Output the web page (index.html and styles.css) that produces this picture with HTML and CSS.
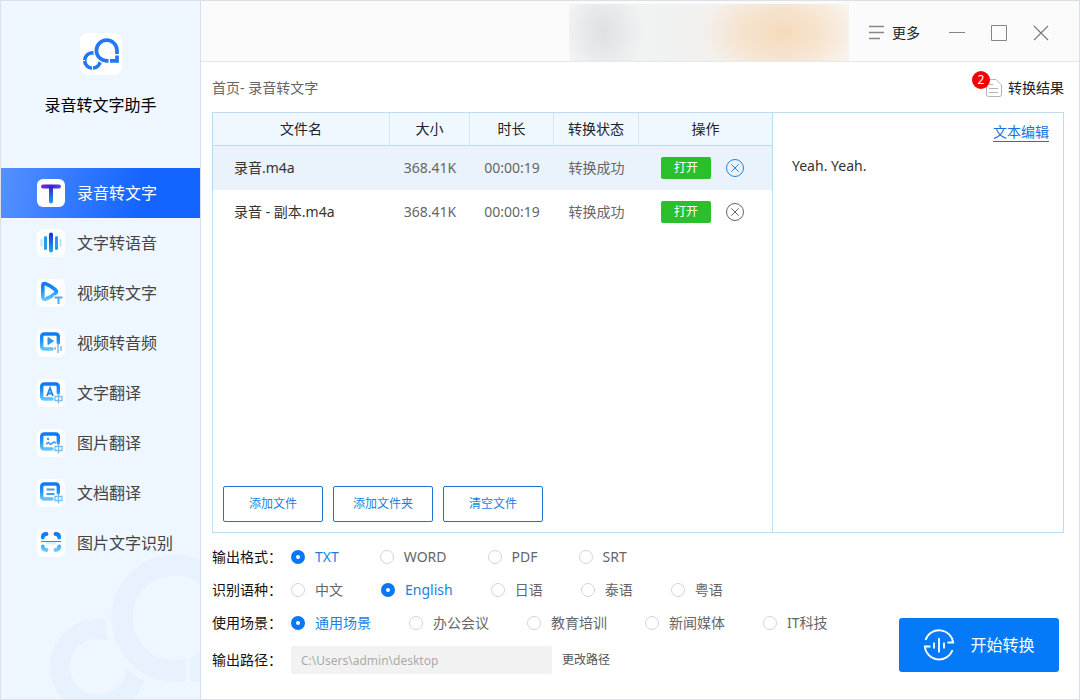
FILE: index.html
```html
<!DOCTYPE html>
<html lang="zh-CN">
<head>
<meta charset="utf-8">
<meta name="viewport" content="width=device-width, initial-scale=1">
<title>录音转文字助手</title>
<link rel="stylesheet" href="styles.css">
</head>
<body>
<svg class="defs" aria-hidden="true">
  <defs>
    <linearGradient id="blue" x1="0" y1="3" x2="0" y2="25" gradientUnits="userSpaceOnUse">
      <stop offset="0" stop-color="#0a74f2"/><stop offset=".4" stop-color="#1c93fa"/><stop offset=".9" stop-color="#74d3fb"/>
    </linearGradient>
    <linearGradient id="violet" x1="4" y1="0" x2="24" y2="0" gradientUnits="userSpaceOnUse">
      <stop offset="0" stop-color="#7a2be8"/><stop offset=".5" stop-color="#3c1fd0"/><stop offset="1" stop-color="#5b4be8"/>
    </linearGradient>
    <linearGradient id="stem" x1="0" y1="8" x2="0" y2="25" gradientUnits="userSpaceOnUse">
      <stop offset="0" stop-color="#2f2bd6"/><stop offset="1" stop-color="#1aa0f5"/>
    </linearGradient>
    <linearGradient id="bar" x1="0" y1="4" x2="0" y2="24" gradientUnits="userSpaceOnUse">
      <stop offset="0" stop-color="#1530d8"/><stop offset="1" stop-color="#18b4f5"/>
    </linearGradient>
    <symbol id="frame" viewBox="0 0 28 28">
      <path d="M15 20H7.500Q4.700 20 4.700 17.200V7.800Q4.700 5 7.500 5H18.500Q21.300 5 21.300 7.800V14" fill="none" stroke="url(#blue)" stroke-width="3.400" stroke-linecap="round"/>
    </symbol>
    <symbol id="zhong" viewBox="0 0 28 28">
      <path d="M18 17.500h7v4h-7zM21.500 15V24.500" fill="none" stroke="#74bdf3" stroke-width="1.300"/>
    </symbol>
  </defs>
</svg>
<div class="app">
  <aside class="sidebar">
    <svg class="watermark" viewBox="0 0 150 145" aria-hidden="true">
      <g fill="none" stroke="#e8f1fe">
        <circle cx="48" cy="113" r="38" stroke-width="20"/>
        <circle cx="125" cy="64" r="66" stroke="#eef6ff" stroke-width="8"/>
        <circle cx="125" cy="64" r="53" stroke-width="21"/>
        <path d="M125 117h10M141 117h10" stroke-width="21"/>
        <path d="M138 105v24" stroke="#eef6ff" stroke-width="5"/>
      </g>
    </svg>
    <div class="brand">
      <svg class="logo" viewBox="0 0 42 42" aria-hidden="true">
        <g fill="none" stroke="#2078f4">
          <circle cx="12.500" cy="27.500" r="7.800" stroke-width="3.600"/>
          <path d="M12.500 33v7M2 27.500h3" stroke="#fff" stroke-width="1"/>
          <circle cx="26.700" cy="17.500" r="12.500" fill="#fff" stroke="#fff" stroke-width="2"/>
          <path d="M37 21V17.500A10.300 10.300 0 1 0 26.700 27.800H28.500" stroke-width="3.700"/>
          <path d="M30 27.800H37V22.400" stroke-width="3.700"/>
        </g>
      </svg>
      <h1 class="brand-name">录音转文字助手</h1>
    </div>
    <nav class="nav">
      <a class="nav-item active" href="#"><svg class="nav-icon" viewBox="0 0 28 28"><path d="M14 9v13.500" stroke="url(#stem)" stroke-width="4" stroke-linecap="round"/><rect x="4" y="5.500" width="20" height="4" rx="2" fill="url(#violet)"/></svg>录音转文字</a>
      <a class="nav-item" href="#"><svg class="nav-icon" viewBox="0 0 28 28"><rect x="12" y="3.500" width="4" height="20" rx="2" fill="url(#bar)"/><g fill="#259bef"><rect x="7" y="7" width="3" height="14" rx="1.500"/><rect x="18" y="7" width="3" height="14" rx="1.500"/></g><g fill="#b4e6fa"><rect x="3.500" y="10" width="2" height="8" rx="1"/><rect x="22.500" y="10" width="2" height="8" rx="1"/></g></svg>文字转语音</a>
      <a class="nav-item" href="#"><svg class="nav-icon" viewBox="0 0 28 28"><path d="M5.800 7Q5.800 3.600 8.800 4.800Q15.500 7.600 18.800 11.200Q20.200 13 18.200 14.600Q14.500 17.800 9 20Q5.800 21 5.800 17.800Z" fill="none" stroke="url(#blue)" stroke-width="3.600" stroke-linejoin="round"/><path d="M16.500 16.500H27V26H19V21H16.500z" fill="#fff"/><path d="M17.500 18.500h8M21.500 18.500V25" stroke="#4eabf1" stroke-width="2"/></svg>视频转文字</a>
      <a class="nav-item" href="#"><svg class="nav-icon" viewBox="0 0 28 28"><use href="#frame"/><path d="M11 8.500l5.500 3.500L11 15.500z" fill="#2c93f3" stroke="#2c93f3" stroke-linejoin="round"/><path d="M18 18v3M21 15v9M24 17v5" stroke="#74bdf3" stroke-width="1.500"/></svg>视频转音频</a>
      <a class="nav-item" href="#"><svg class="nav-icon" viewBox="0 0 28 28"><use href="#frame"/><path d="M10 17L13 9L16 17M11.200 14.500h3.600" fill="none" stroke="#2388ee" stroke-width="1.800"/><use href="#zhong"/></svg>文字翻译</a>
      <a class="nav-item" href="#"><svg class="nav-icon" viewBox="0 0 28 28"><use href="#frame"/><circle cx="11" cy="10" r="1.200" fill="#3ca0f5"/><path d="M9 15l2.500-1.500 2 2 3.500-2.500 2 1" fill="none" stroke="#3ca0f5" stroke-width="1.700"/><use href="#zhong"/></svg>图片翻译</a>
      <a class="nav-item" href="#"><svg class="nav-icon" viewBox="0 0 28 28"><use href="#frame"/><path d="M9.500 10.500h8M9.500 15h8" stroke="#3c9ff5" stroke-width="2"/><use href="#zhong"/></svg>文档翻译</a>
      <a class="nav-item" href="#"><svg class="nav-icon" viewBox="0 0 28 28"><path d="M5.800 8.500Q5.800 5 9.500 5M18.500 5Q22.200 5 22.200 8.500M22.200 17.500Q22.200 21 18.500 21M9.500 21Q5.800 21 5.800 17.500" fill="none" stroke="url(#blue)" stroke-width="3.800" stroke-linecap="round"/><path d="M9 13h10v2.500H9z" fill="#d5edfd"/><path d="M4 12.500h20" stroke="#278def" stroke-width="1"/></svg>图片文字识别</a>
    </nav>
  </aside>

  <main class="main">
    <header class="topbar">
      <div class="account"></div>
      <button class="more" type="button"><svg width="16" height="16" viewBox="0 0 16 16" aria-hidden="true"><path d="M0 1.500h15M0 7.500h15M0 13.500h11" stroke="#868686" stroke-width="1.600"/></svg>更多</button>
      <div class="window-controls">
        <button type="button" aria-label="最小化"><svg width="16" height="16" viewBox="0 0 16 16"><path d="M0 7.500h16" stroke="#858585"/></svg></button>
        <button type="button" aria-label="最大化"><svg width="16" height="16" viewBox="0 0 16 16"><path d="M.5.5h15v15H.5z" fill="none" stroke="#858585"/></svg></button>
        <button type="button" aria-label="关闭"><svg width="16" height="16" viewBox="0 0 16 16"><path d="M1 1l14 14M15 1L1 15" stroke="#777" stroke-width="1.100"/></svg></button>
      </div>
    </header>

    <div class="content">
      <div class="crumbs">
        <span>首页- 录音转文字</span>
        <button class="results" type="button">
          <span class="results-icon"><svg width="16" height="18" viewBox="0 0 16 18" aria-hidden="true"><path d="M.5.500H10L15.500 6V15.500Q15.500 17.500 13.500 17.500H2.500Q.5 17.500.5 15.500Z" fill="none" stroke="#b4b4b4"/><path d="M3 5.500h4M3 9.500h9M3 13.500h9" stroke="#b4b4b4"/></svg><span class="badge">2</span></span>转换结果
        </button>
      </div>

      <section class="panel">
        <div class="files">
          <table class="table">
            <colgroup><col class="col-name"><col class="col-size"><col class="col-time"><col class="col-state"><col></colgroup>
            <thead><tr><th>文件名</th><th>大小</th><th>时长</th><th>转换状态</th><th>操作</th></tr></thead>
            <tbody>
              <tr class="selected"><td>录音.m4a</td><td>368.41K</td><td>00:00:19</td><td>转换成功</td><td><div class="ops"><button class="open" type="button">打开</button><button class="remove" type="button" aria-label="删除"><svg width="20" height="20" viewBox="0 0 20 20"><circle cx="10" cy="10" r="8.500"/><path d="M6.300 6.300l7.400 7.400M13.700 6.300l-7.400 7.400"/></svg></button></div></td></tr>
              <tr><td>录音 - 副本.m4a</td><td>368.41K</td><td>00:00:19</td><td>转换成功</td><td><div class="ops"><button class="open" type="button">打开</button><button class="remove" type="button" aria-label="删除"><svg width="20" height="20" viewBox="0 0 20 20"><circle cx="10" cy="10" r="8.500"/><path d="M6.300 6.300l7.400 7.400M13.700 6.300l-7.400 7.400"/></svg></button></div></td></tr>
            </tbody>
          </table>
          <div class="file-actions">
            <button type="button">添加文件</button>
            <button type="button">添加文件夹</button>
            <button type="button">清空文件</button>
          </div>
        </div>
        <div class="preview">
          <a class="edit" href="#">文本编辑</a>
          <p class="transcript">Yeah. Yeah.</p>
        </div>
      </section>

      <form class="settings">
        <div class="options">
          <div class="row format-row" role="radiogroup" aria-labelledby="l-format">
            <span class="label" id="l-format">输出格式：</span>
            <label><input type="radio" name="format" checked><span>TXT</span></label>
            <label><input type="radio" name="format"><span>WORD</span></label>
            <label><input type="radio" name="format"><span>PDF</span></label>
            <label><input type="radio" name="format"><span>SRT</span></label>
          </div>
          <div class="row" role="radiogroup" aria-labelledby="l-lang">
            <span class="label" id="l-lang">识别语种：</span>
            <label><input type="radio" name="lang"><span>中文</span></label>
            <label><input type="radio" name="lang" checked><span>English</span></label>
            <label><input type="radio" name="lang"><span>日语</span></label>
            <label><input type="radio" name="lang"><span>泰语</span></label>
            <label><input type="radio" name="lang"><span>粤语</span></label>
          </div>
          <div class="row" role="radiogroup" aria-labelledby="l-scene">
            <span class="label" id="l-scene">使用场景：</span>
            <label><input type="radio" name="scene" checked><span>通用场景</span></label>
            <label><input type="radio" name="scene"><span>办公会议</span></label>
            <label><input type="radio" name="scene"><span>教育培训</span></label>
            <label><input type="radio" name="scene"><span>新闻媒体</span></label>
            <label><input type="radio" name="scene"><span>IT科技</span></label>
          </div>
          <div class="row path-row">
            <label class="label" for="path">输出路径：</label>
            <input class="path" id="path" type="text" value="C:\Users\admin\desktop" readonly>
            <button class="change" type="button">更改路径</button>
          </div>
        </div>
        <button class="start" type="button">
          <svg width="32" height="32" viewBox="0 0 32 32" aria-hidden="true"><g fill="none" stroke="#fff" stroke-width="1.800"><path d="M2.500 11A14.300 14.300 0 0 1 30.200 13.500H24.500M29.500 21A14.300 14.300 0 0 1 1.800 17.500H7.500"/><path d="M11 13.500v6M16 9v14.500M21 13.500v6"/></g></svg>开始转换
        </button>
      </form>
    </div>
  </main>
</div>
</body>
</html>
```
FILE: styles.css
```css
* { box-sizing: border-box; }

body {
  margin: 0;
  background: #fff;
  color: #333;
  font: 14px/20px "Noto Sans", "Noto Sans CJK SC", sans-serif;
}

button {
  padding: 0;
  border: 0;
  background: none;
  color: inherit;
  font: inherit;
  cursor: pointer;
}

svg { display: block; }

.defs { position: absolute; width: 0; height: 0; }

.app {
  display: flex;
  min-height: 100vh;
  border: 1px solid #dcdfe4;
}

/* Sidebar */
.sidebar {
  position: relative;
  flex: none;
  width: 200px;
  overflow: hidden;
  border-right: 1px solid #d7e1ed;
  background: #eef6ff;
}

.watermark {
  position: absolute;
  right: 0;
  bottom: 0;
  width: 150px;
}

.brand {
  display: flex;
  flex-direction: column;
  align-items: center;
  gap: 18px;
  height: 167px;
  padding-top: 32px;
}

.logo {
  width: 42px;
  border-radius: 8px;
  background: #fff;
}

.brand-name {
  margin: 0;
  color: #000;
  font-size: 16px;
  font-weight: 400;
  line-height: 24px;
}

.nav { position: relative; }

.nav-item {
  display: flex;
  align-items: center;
  gap: 12px;
  height: 50px;
  padding-left: 36px;
  color: #444;
  font-size: 16px;
  text-decoration: none;
}

.nav-item.active {
  background: linear-gradient(100deg, #5590ff, #1464ff 70%);
  color: #fff;
}

.nav-icon {
  width: 28px;
  border-radius: 6px;
  background: #fff;
}

/* Top bar */
.main {
  display: flex;
  flex: 1;
  flex-direction: column;
  min-width: 0;
}

.topbar {
  display: flex;
  align-items: center;
  justify-content: flex-end;
  height: 61px;
  padding: 4px 30px 0 0;
  border-bottom: 1px solid #e8e8e8;
  background: #fbfbfb;
}

.account {
  align-self: flex-end;
  width: 280px;
  height: 57px;
  margin-right: 20px;
  background:
    radial-gradient(ellipse 80px 48px at 76% 50%, #f5dabb, #f5dabb99 50%, #f5dabb00),
    radial-gradient(ellipse 42px 50px at 12% 48%, #dce1e3, #dce1e300),
    linear-gradient(90deg, #f4f5f5, #f0f1f1 35%, #f5f0eb 60%, #f9f4f0);
}

.more {
  display: flex;
  align-items: center;
  gap: 7px;
  margin-right: 29px;
  color: #222;
}

.window-controls {
  display: flex;
  gap: 26px;
}

/* Content */
.content {
  display: flex;
  flex: 1;
  flex-direction: column;
  padding: 0 15px 18px 11px;
}

.crumbs {
  display: flex;
  align-items: center;
  justify-content: space-between;
  height: 50px;
  padding-top: 2px;
  color: #666;
}

.results {
  display: flex;
  align-items: center;
  gap: 6px;
  color: #222;
}

.results-icon { position: relative; }

.badge {
  position: absolute;
  top: -8px;
  left: -14px;
  width: 18px;
  border-radius: 9px;
  background: #f60008;
  color: #fff;
  font-size: 12px;
  line-height: 18px;
  text-align: center;
}

.panel {
  display: grid;
  flex: 1;
  grid-template-columns: 560fr 290fr;
  border: 1px solid #bfdcee;
}

.files {
  display: flex;
  flex-direction: column;
  justify-content: space-between;
  border-right: 1px solid #bfdcee;
}

.table {
  width: 100%;
  border-collapse: separate;
  border-spacing: 0;
  table-layout: fixed;
}

.col-name { width: 177px; }
.col-size { width: 80px; }
.col-time { width: 84px; }
.col-state { width: 85px; }

.table th {
  height: 33px;
  padding: 0;
  border-right: 1px solid #d3e6f3;
  border-bottom: 1px solid #bfdcee;
  background: #f0f8ff;
  color: #222;
  font-weight: 400;
}

.table th:last-child { border-right: 0; }

.table td {
  height: 44px;
  padding: 0;
  color: #666;
  text-align: center;
}

.table td:first-child {
  padding-left: 21px;
  color: #333;
  text-align: left;
}

.selected td { background: #eaf2fc; }

.ops {
  display: flex;
  align-items: center;
  gap: 14px;
  padding-left: 22px;
}

.open {
  width: 50px;
  border-radius: 2px;
  background: #2bbf2b;
  color: #fff;
  font-size: 12px;
  line-height: 22px;
}

.remove svg {
  fill: none;
  stroke: #666;
}

.selected .remove svg { stroke: #2583e0; }

.file-actions {
  display: flex;
  gap: 10px;
  padding: 10px;
}

.file-actions button {
  width: 100px;
  height: 36px;
  border: 1px solid #1b76cf;
  border-radius: 2px;
  color: #1b7fdf;
  font-size: 12px;
}

.preview {
  display: flex;
  flex-direction: column;
  padding: 10px 14px 10px 19px;
}

.edit {
  align-self: flex-end;
  border-bottom: 1px solid #1673e0;
  color: #1673e0;
  line-height: 18px;
  text-decoration: none;
}

.transcript {
  margin: 14px 0;
  color: #333;
}

/* Settings */
.settings {
  display: flex;
  align-items: flex-end;
  justify-content: space-between;
  padding: 7px 5px 0 0;
}

.row {
  --gap: 38px;
  display: flex;
  align-items: center;
  gap: var(--gap);
  height: 33px;
}

.format-row { --gap: 41px; }

.label {
  width: 79px;
  margin-right: calc(0px - var(--gap));
  color: #111;
  white-space: nowrap;
}

.row label:not(.label) {
  display: flex;
  align-items: center;
  gap: 10px;
  color: #666;
}

.row input[type="radio"] {
  width: 14px;
  height: 14px;
  margin: 0;
  border: 1px solid #d4d4d4;
  border-radius: 50%;
  background: #fff;
  appearance: none;
}

.row input[type="radio"]:checked {
  border: 5px solid #0878f5;
}

.row input[type="radio"]:checked + span { color: #1a7fe6; }

.path-row {
  --gap: 10px;
  height: 42px;
}

.path {
  width: 261px;
  height: 28px;
  padding: 0 10px;
  border: 0;
  border-radius: 2px;
  background: #f2f2f2;
  color: #aaa;
  font: inherit;
  font-size: 12px;
}

.change {
  color: #555;
  font-size: 12px;
}

.start {
  display: flex;
  align-items: center;
  justify-content: center;
  gap: 15px;
  width: 160px;
  height: 54px;
  margin-bottom: 9px;
  border-radius: 3px;
  background: #047af8;
  color: #fff;
  font-size: 16px;
}
```
